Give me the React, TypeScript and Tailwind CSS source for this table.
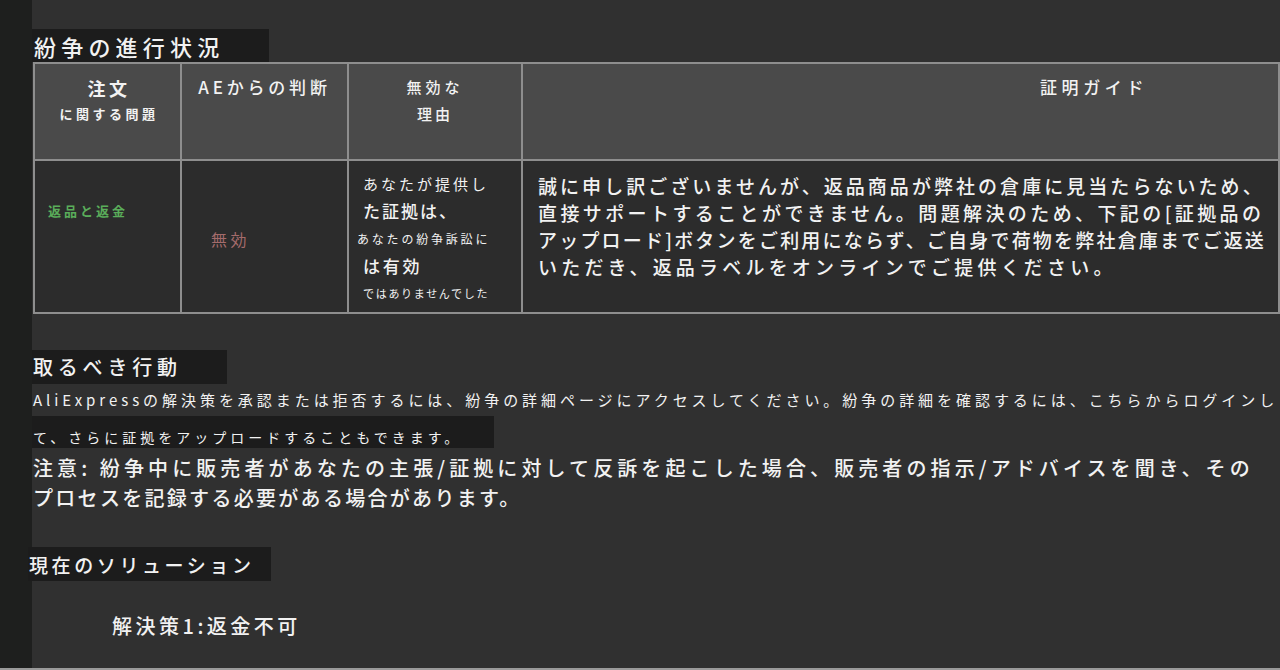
const JP = { fontFamily: '"Noto Sans CJK JP", "Noto Sans", sans-serif' }

const Box = ({ children, className }: { children: React.ReactNode; className: string }) => (
  <div className={`flex items-center bg-[#1c1c1c] ${className}`}>{children}</div>
)

const App = () => {
  return (
    <div style={JP} className="w-[1280px] h-[670px] flex flex-col bg-[#303030] text-[#f2f2f2] overflow-hidden">
      <div className="flex flex-1 min-h-0">
        <div className="w-[32px] bg-[#1e1f1e] shrink-0" />
        <div className="flex-1 flex flex-col pt-[29px] min-w-0">
          <Box className="w-[237px] h-[33px] pl-[2px]">
            <span className="text-[22px] leading-none tracking-[5.2px] font-medium">紛争の進行状況</span>
          </Box>

          <table className="ml-[1px] w-[1247px] table-fixed border-collapse border-2 border-[#8e8e8e]">
            <colgroup>
              <col className="w-[147px]" />
              <col className="w-[167px]" />
              <col className="w-[174px]" />
              <col />
            </colgroup>
            <thead>
              <tr className="h-[97px] bg-[#4a4a4a]">
                <th className="border-2 border-[#8e8e8e] align-top pt-[12px] font-bold text-center">
                  <div className="text-[18px] leading-[24px] tracking-[3.5px] pl-[3px]">注文</div>
                  <div className="text-[13px] leading-[18px] tracking-[3.5px] mt-[5px] pl-[3px]">に関する問題</div>
                </th>
                <th className="border-2 border-[#8e8e8e] align-top pt-[12px] text-center font-medium">
                  <div className="text-[17px] leading-[22px] tracking-[3.8px]">AEからの判断</div>
                </th>
                <th className="border-2 border-[#8e8e8e] align-top pt-[13px] text-center font-medium">
                  <div className="text-[15px] leading-[20px] tracking-[4px]">無効な</div>
                  <div className="text-[15px] leading-[20px] tracking-[3px] mt-[7px]">理由</div>
                </th>
                <th className="border-2 border-[#8e8e8e] align-top pt-[12px] text-left font-medium">
                  <div className="text-[17px] leading-[22px] tracking-[4.6px] pl-[517px]">証明ガイド</div>
                </th>
              </tr>
            </thead>
            <tbody>
              <tr className="h-[153px] bg-[#2c2c2c]">
                <td className="border-2 border-[#8e8e8e] align-top pt-[40px] pl-[13px]">
                  <div className="text-[13px] leading-[20px] tracking-[3px] font-bold text-[#5aad5a]">返品と返金</div>
                </td>
                <td className="border-2 border-[#8e8e8e] align-top pt-[67px] pl-[29px]">
                  <div className="text-[16px] leading-[22px] tracking-[3.5px] text-[#a46b6b]">無効</div>
                </td>
                <td className="border-2 border-[#8e8e8e] align-top pt-[10px] pl-[14px] whitespace-nowrap">
                  <div className="text-[15px] leading-[25px] tracking-[3px]">あなたが提供し</div>
                  <div className="text-[17px] leading-[30px] tracking-[2px] font-medium">た証拠は、</div>
                  <div className="text-[12px] leading-[25px] tracking-[2.8px] -ml-[6px]">あなたの紛争訴訟に</div>
                  <div className="text-[17px] leading-[30px] tracking-[2.7px] font-medium">は有効</div>
                  <div className="text-[11px] leading-[24px] tracking-[1.7px]">ではありませんでした</div>
                </td>
                <td className="border-2 border-[#8e8e8e] align-top pt-[11px] pl-[15px] whitespace-nowrap">
                  <div className="text-[19px] leading-[27px] font-medium">
                    <div className="tracking-[3.05px]">誠に申し訳ございませんが、返品商品が弊社の倉庫に見当たらないため、</div>
                    <div className="tracking-[3.4px]">直接サポートすることができません。問題解決のため、下記の[証拠品の</div>
                    <div className="tracking-[2.2px]">アップロード]ボタンをご利用にならず、ご自身で荷物を弊社倉庫までご返送</div>
                    <div className="tracking-[4.2px]">いただき、返品ラベルをオンラインでご提供ください。</div>
                  </div>
                </td>
              </tr>
            </tbody>
          </table>

          <Box className="w-[195px] h-[34px] mt-[36px] pl-[1px]">
            <span className="text-[20px] leading-none tracking-[4.8px] font-medium">取るべき行動</span>
          </Box>
          <div className="mt-[4px] pl-[1px] text-[15px] leading-[24px] tracking-[3.95px] whitespace-nowrap">
            AliExpressの解決策を承認または拒否するには、紛争の詳細ページにアクセスしてください。紛争の詳細を確認するには、こちらからログインし
          </div>
          <Box className="w-[462px] h-[32px] mt-[4px] pt-[10px] pl-[1px]">
            <span className="text-[14px] leading-none tracking-[4px]">て、さらに証拠をアップロードすることもできます。</span>
          </Box>
          <div className="mt-[5px] pl-[1px] text-[20px] leading-[30px] tracking-[4.1px] whitespace-nowrap font-medium">
            注意: 紛争中に販売者があなたの主張/証拠に対して反訴を起こした場合、販売者の指示/アドバイスを聞き、その
          </div>
          <div className="pl-[1px] text-[20px] leading-[30px] tracking-[2.3px] whitespace-nowrap font-medium">
            プロセスを記録する必要がある場合があります。
          </div>

          <Box className="w-[243px] h-[34px] mt-[34px] -ml-[4px] pl-[1px]">
            <span className="text-[19px] leading-none tracking-[3.6px] font-medium">現在のソリューション</span>
          </Box>
          <div className="mt-[30px] pl-[80px] text-[20px] leading-[30px] tracking-[3.5px] font-medium">解決策1:返金不可</div>
        </div>
      </div>
      <div className="h-[2px] bg-[#9a9a9a] shrink-0" />
    </div>
  )
}

export default App
